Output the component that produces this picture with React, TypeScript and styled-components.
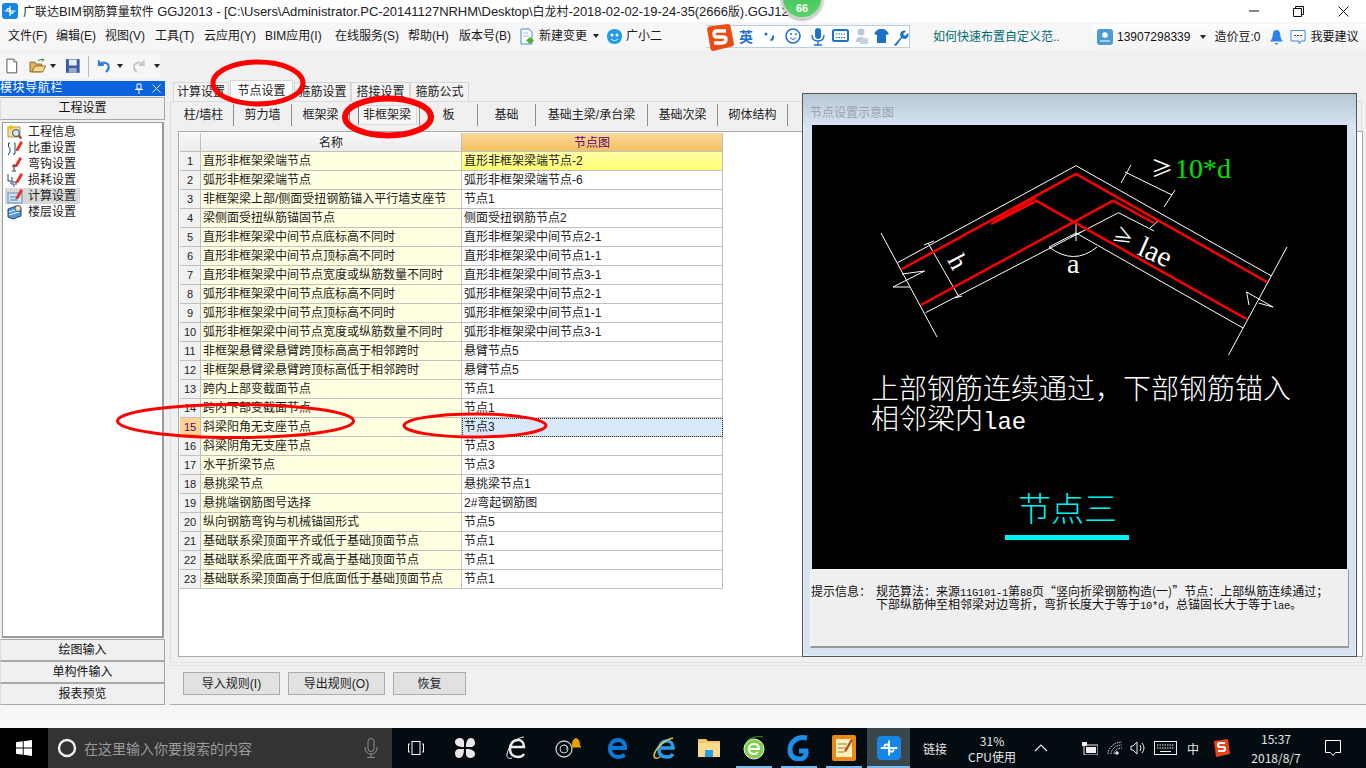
import React from "react";
import styled, { createGlobalStyle } from "styled-components";

const CJK = `"Noto Sans CJK SC", sans-serif`;
const UI = `"Liberation Sans", "Noto Sans CJK SC", sans-serif`;

const Global = createGlobalStyle`
  html, body { margin: 0; padding: 0; background: #f8f8f8; }
  * { box-sizing: border-box; }
`;

const Screen = styled.div`
  position: relative; width: 1366px; height: 768px; overflow: hidden;
  display: flex; flex-direction: column; font: 12px/1 ${UI}; color: #111; background: #f8f8f8;
`;
const TitleBar = styled.div`
  height: 22px; flex: none; display: flex; align-items: center; background: #fff; padding-left: 2px;
`;
const TitleText = styled.div`
  margin-left: 5px; font-size: 13px; white-space: nowrap; color: #222; flex: 1; letter-spacing: -0.04px;
`;
const TitleCjk = styled.span`
  font-size: 12px;
`;
const WinButton = styled.div`
  width: 45px; height: 22px; display: flex; align-items: center; justify-content: center;
`;
const Score = styled.div`
  position: absolute; left: 781px; top: -23px; width: 42px; height: 42px; border-radius: 50%;
  background: linear-gradient(#3dbb57, #58d468); border: 2px solid #c8d0c8; box-shadow: 0 1px 3px #999;
  display: flex; align-items: flex-end; justify-content: center; padding-bottom: 3px;
  color: #fff; font-weight: 700; font-size: 11px;
`;
const MenuBar = styled.div`
  height: 28px; flex: none; display: flex; align-items: center; background: #f6f6f6; padding-left: 8px; position: relative;
`;
const MenuItem = styled.div<{ $w: number }>`
  width: ${p => p.$w}px; flex: none; white-space: nowrap; font-size: 12px; color: #1a1a1a; display: flex; align-items: center;
`;
const Caret = styled.span`
  width: 0; height: 0; border: 3px solid transparent; border-top: 4px solid #222; border-bottom: 0; display: inline-block; flex: none;
`;
const ImeBar = styled.div`
  position: absolute; left: 706px; top: 3px; width: 204px; height: 23px; background: #fff;
  border: 1px solid #b9cfe6; border-left: 0; display: flex; align-items: center; padding-left: 33px; gap: 5px;
`;
const ImeLogo = styled.div`
  position: absolute; left: 0; top: -2px;
`;
const ImeText = styled.span`
  color: #1b72c8; font-weight: 700; font-size: 14px; width: 17px;
`;
const Hint = styled.div`
  position: absolute; left: 933px; top: 9px; color: #006a6e; font-size: 12px; white-space: nowrap;
`;
const UserBox = styled.div`
  position: absolute; left: 1092px; top: 2px; right: 0; height: 26px; background: linear-gradient(#fdfdfd, #f3f3f3);
  display: flex; align-items: center; padding-left: 5px; font-size: 12px;
`;
const UserText = styled.span<{ $ml: number }>`
  margin-left: ${p => p.$ml}px; white-space: nowrap; display: flex; align-items: center;
`;
const ToolBar = styled.div`
  height: 31px; flex: none; background: #f0f0f0; display: flex; align-items: center; padding-top: 1px;
`;
const ToolGroup = styled.div`
  width: 160px; height: 25px; background: #f6f6f6; display: flex; align-items: center; padding-left: 4px; border-radius: 2px;
`;
const ToolGap = styled.span<{ $w: number }>`
  display: inline-block; width: ${p => p.$w}px; flex: none;
`;
const ToolSep = styled.span`
  width: 1px; height: 21px; background: #bbb; margin: 0 7px 0 7px; flex: none;
`;
const Main = styled.div`
  height: 624px; flex: none; display: flex; background: #f0f0f0;
`;
const Side = styled.aside`
  width: 165px; flex: none; display: flex; flex-direction: column;
`;
const SideHead = styled.div`
  height: 15px; background: #0a62dc; color: #fff; display: flex; align-items: center; font-size: 12px; padding-right: 4px;
  letter-spacing: 0.6px;
`;
const SideHeadTitle = styled.span`
  flex: 1;
`;
const SideButton = styled.div<{ $h: number; $mt: number }>`
  height: ${p => p.$h}px; margin-top: ${p => p.$mt}px; background: #f0f0f0; border: 1px solid #a8a8a8; border-left-color: #ddd;
  display: flex; align-items: center; justify-content: center; font-size: 12px;
`;
const SideList = styled.div`
  height: 517px; margin: 2px 1px 0 2px; background: #fff; border: 1px solid #9b9b9b; border-width: 1px 2px 2px 1px; padding: 1px 3px;
  display: flex; flex-direction: column;
`;
const SideRow = styled.div<{ $on?: boolean }>`
  height: 16px; width: 75px; margin-left: -1px; padding-left: 2px; display: flex; align-items: center; gap: 5px; font-size: 12px; color: #222;
  background: ${p => (p.$on ? "#d8d8d8" : "transparent")};
`;
const Content = styled.main`
  width: 1196px; margin-left: 5px; flex: none; display: flex; flex-direction: column; position: relative;
`;
const Tabs = styled.div`
  height: 20px; flex: none; display: flex; align-items: flex-end; padding-left: 3px;
`;
const Tab = styled.div<{ $w: number; $on?: boolean; $ml?: number }>`
  width: ${p => p.$w}px; margin-left: ${p => p.$ml ?? 0}px; height: ${p => (p.$on ? 21 : 19)}px;
  background: ${p => (p.$on ? "#fff" : "#f2f2f2")}; border: 1px solid #d6d6d6; border-bottom: 0;
  display: flex; align-items: center; justify-content: center; font-size: 12px; color: #222; white-space: nowrap;
  position: relative; z-index: ${p => (p.$on ? 1 : 0)};
`;
const Panel = styled.section`
  height: 562px; flex: none; width: 1192px; background: #f0f0f0; border: 1px solid #dcdcdc; border-bottom-color: #e4e4e4;
  display: flex; flex-direction: column; padding-left: 3px; position: relative;
`;
const SubTabs = styled.div`
  height: 29px; flex: none; display: flex; align-items: flex-start; padding-top: 2px;
`;
const SubTab = styled.div<{ $w: number }>`
  width: ${p => p.$w}px; height: 22px; display: flex; align-items: center; justify-content: center; font-size: 12px;
  border-right: 1px solid #8f8f8f; color: #222; white-space: nowrap; flex: none;
`;
const SubActive = styled.div`
  width: 59px; height: 20px; margin-left: 5px; display: flex; align-items: center; justify-content: center;
  background: #f6f6f6; border: 1px solid #dadada; border-left: 1px solid #777;
`;
const GridBox = styled.div`
  width: 1185px; height: 526px; margin-left: 4px; background: #fff; border: 1px solid #a9a9a9; padding: 1px;
`;
const Grid = styled.div`
  width: 543px; display: grid; grid-template-columns: 21px 261px 261px; grid-auto-rows: 19px;
`;
const Cell = styled.div`
  border-right: 1px solid #c0c0c0; border-bottom: 1px solid #c0c0c0; display: flex; align-items: center; padding-left: 2px;
  font-size: 12px; color: #1c1c1c; white-space: nowrap; overflow: hidden;
`;
const HeadCell = styled(Cell)<{ $orange?: boolean }>`
  justify-content: center; padding: 1px 0 0;
  background: ${p => (p.$orange ? "linear-gradient(#fad79b, #f3c160)" : "linear-gradient(#f8f8f8, #ececec)")};
  color: ${p => (p.$orange ? "#5a007c" : "#222")};
`;
const NumCell = styled(Cell)<{ $on?: boolean }>`
  justify-content: center; padding: 0; font-size: 11px;
  background: ${p => (p.$on ? "#ffd08e" : "#f1f1f1")}; color: ${p => (p.$on ? "#4b0a7c" : "#222")};
`;
const NameCell = styled(Cell)`
  background: #ffffe1;
`;
const NodeCell = styled(Cell)<{ $kind?: "first" | "selected" }>`
  background: ${p => (p.$kind === "first" ? "linear-gradient(#ffffa8, #ffff70)" : p.$kind === "selected" ? "#d7e8f8" : "#fff")};
  outline: ${p => (p.$kind === "selected" ? "1px dotted #333" : "none")}; outline-offset: -1px;
`;
const Dialog = styled.div`
  position: absolute; left: 631px; top: -9px; width: 555px; height: 564px; z-index: 3; border: 1px solid #555;
  background: #d6e3f1; display: flex; flex-direction: column; align-items: center;
  box-shadow: inset 0 0 0 1px #e6eef6;
`;
const Caption = styled.div`
  height: 31px; flex: none; width: 100%; background: linear-gradient(#b8c7d5, #d5e3f1);
  color: #9aa3ab; font-size: 12px; padding: 13px 0 0 7px;
`;
const CanvasFrame = styled.div`
  width: 535px; height: 444px; flex: none; background: #000; line-height: 0;
`;
const InfoBox = styled.div`
  width: 539px; height: 79px; flex: none; background: #efefef; border: 1px solid #f8f8f8; border-right-color: #999; border-bottom: 2px solid #999;
  padding: 14px 0 0 0; display: flex; font: 12px/13px ${CJK};
`;
const InfoLabel = styled.div`
  width: 65px; flex: none; color: #111;
`;
const InfoBody = styled.div`
  color: #111; white-space: nowrap; display: flex; flex-direction: column;
`;
const InfoLine = styled.div`
  height: 13px; line-height: 13px;
`;
const Half = styled.span`
  font: 10.5px/13px "Liberation Mono", monospace; letter-spacing: -0.3px;
`;
const Footer = styled.div`
  height: 40px; width: 1196px; margin-top: 2px; flex: none; background: #f0f0f0; border-top: 1px solid #e4e4e4; border-bottom: 1px solid #aaa;
  display: flex; align-items: flex-start; padding: 6px 0 0 13px; gap: 8px;
`;
const ActionButton = styled.div<{ $w: number }>`
  width: ${p => p.$w}px; height: 23px; background: #e1e1e1; border: 1px solid #adadad; display: flex; align-items: center; justify-content: center;
  font-size: 12px; color: #222;
`;
const Spacer = styled.div`
  height: 23px; flex: none; background: linear-gradient(#f4f4f4, #fbfbfb);
`;
const TaskBar = styled.footer`
  height: 40px; flex: none; background: #030c10; display: flex; align-items: stretch; color: #e8e8e8;
`;
const StartBtn = styled.div`
  width: 48px; background: #000; display: flex; align-items: center; justify-content: center; flex: none;
`;
const Search = styled.div`
  width: 344px; flex: none; background: #333; display: flex; align-items: center; padding-left: 9px; color: #9a9a9a; font: 14px ${CJK};
`;
const SearchText = styled.span`
  margin-left: 7px; flex: 1; white-space: nowrap; font-size: 14px;
`;
const TaskSlot = styled.div<{ $w: number; $line?: boolean; $active?: boolean }>`
  width: ${p => p.$w}px; flex: none; display: flex; align-items: center; justify-content: center; position: relative;
  background: ${p => (p.$active ? "#39464b" : "transparent")};
  border-bottom: ${p => (p.$line ? "2px solid #76b9ed" : "0")};
  padding-top: ${p => (p.$line ? "2px" : "0")};
`;
const TrayText = styled.div<{ $w: number; $gap?: number }>`
  width: ${p => p.$w}px; flex: none; display: flex; flex-direction: column; align-items: center; justify-content: center; gap: ${p => p.$gap ?? 3}px;
  font: 12px/13px ${CJK}; color: #e6e6e6; white-space: nowrap;
`;
const Marks = styled.svg`
  position: absolute; left: 0; top: 0; pointer-events: none; z-index: 9;
`;

const Glodon = ({ s = 16 }: { s?: number }) => (
  <svg width={s} height={s} viewBox="0 0 16 16">
    <rect width="16" height="16" rx="3" fill="#1687e4" />
    <path d="M8 3v10M2.5 8h11M8 8C8 5 5 5 5 6.8S7 8 8 8M8 8c0 3 3 3 3 1.2S9 8 8 8" stroke="#fff" strokeWidth="1.2" fill="none" />
  </svg>
);

const IconDoc = () => (
  <svg width="16" height="16" viewBox="0 0 16 16"><path d="M3 1h7l3 3v11H3z" fill="#fff" stroke="#555" /><path d="M10 1v3h3" fill="#ddd" stroke="#777" /></svg>
);
const IconOpen = () => (
  <svg width="18" height="16" viewBox="0 0 18 16"><path d="M1 4h5l1 2h6v8H1z" fill="#e3b45c" stroke="#8a6a2a" /><path d="M3 14l3-6h11l-3 6z" fill="#f6d98c" stroke="#8a6a2a" /><path d="M9 3c2-2 4-2 6-1l-1-1.500M15 2l-2 1" stroke="#3c7a2a" fill="none" /></svg>
);
const IconSave = () => (
  <svg width="16" height="16" viewBox="0 0 16 16"><rect x="1" y="1" width="14" height="14" fill="#3a5aa8" /><rect x="4" y="1.500" width="8" height="6" fill="#e8eef8" /><rect x="4" y="10" width="8" height="5" fill="#9ab" /></svg>
);
const IconUndo = ({ c }: { c: string }) => (
  <svg width="16" height="16" viewBox="0 0 16 16"><path d="M3 2v5h5M3 7c3-4 10-3 10 2 0 2-1 4-3 5" stroke={c} strokeWidth="2.200" fill="none" /></svg>
);
const IconRedo = ({ c }: { c: string }) => (
  <svg width="16" height="16" viewBox="0 0 16 16"><path d="M13 2v5H8M13 7C10 3 3 4 3 9c0 2 1 4 3 5" stroke={c} strokeWidth="2" fill="none" /></svg>
);
const IconChangeDoc = () => (
  <svg width="15" height="17" viewBox="0 0 15 17"><path d="M1 1h8l3 3v12H1z" fill="#fff" stroke="#3c8ed8" /><path d="M3 5h5M3 8h6" stroke="#9cc6ea" /><path d="M10 9l4 3.500-4 3.500-4-3.500z" fill="#58ae2c" /></svg>
);
const IconMascot = () => (
  <svg width="17" height="15" viewBox="0 0 17 15"><path d="M1 7c0-4 3-7 7.500-7S16 3 16 7c0 5-3 8-7.500 8S1 12 1 7z" fill="#1f9cea" /><circle cx="6" cy="6" r="1.500" fill="#fff" /><circle cx="11" cy="6" r="1.500" fill="#fff" /><path d="M5 10c2 2 5 2 7 0" stroke="#fff" fill="none" /></svg>
);
const ImeS = () => (
  <svg width="28" height="27" viewBox="0 0 28 27"><path d="M1 5q0-2 2-2.500L22 0q2 0 2.500 2L28 20q0 2-2 2.500L7 27q-2 0-2.500-2z" fill="#ee4a16" /><path d="M20 7H11q-3 0-3 3t3 3h6q3 0 3 2.500T17 19H8" stroke="#fff" strokeWidth="3.400" fill="none" /></svg>
);
const ImeGlyphs = () => (
  <svg width="148" height="20" viewBox="0 0 148 20" fill="none">
    <circle cx="5" cy="7" r="1.500" fill="#1b72c8" /><path d="M12 8.500q1 3-2.500 5" stroke="#1b72c8" strokeWidth="2" />
    <circle cx="32" cy="9" r="7" stroke="#1b72c8" strokeWidth="1.600" /><circle cx="30" cy="7" r="1" fill="#1b72c8" /><circle cx="35" cy="7" r="1" fill="#1b72c8" /><path d="M29 11q3 3 6 0" stroke="#1b72c8" />
    <rect x="54" y="1" width="6" height="11" rx="3" fill="#1b72c8" /><path d="M51 8q0 6 6 6t6-6M57 14v4M53 18h8" stroke="#1b72c8" strokeWidth="1.400" />
    <rect x="72" y="3" width="15" height="11" rx="1.500" stroke="#1b72c8" strokeWidth="2" /><path d="M75 7h9M75 10.500h9" stroke="#1b72c8" strokeDasharray="1.500 1" />
    <circle cx="100" cy="5" r="3.500" fill="#bcc8d4" /><path d="M95 15q0-5 5-5t5 5z" fill="#bcc8d4" /><rect x="99" y="11" width="8" height="6" fill="#c8d4de" />
    <path d="M115 4l3-2h5l3 2 2 3-3 1v8h-9V8l-3-1z" fill="#1b72c8" />
    <path d="M133 18l7-8a4 4 0 0 1 5-6l-3 3 2 2 3-3a4 4 0 0 1-6 5l-6 8z" fill="#1b72c8" />
  </svg>
);
const UserIcon = () => (
  <svg width="16" height="16" viewBox="0 0 16 16"><rect width="16" height="16" rx="3" fill="#4a9bd0" /><circle cx="8" cy="6" r="2.800" fill="#fff" /><path d="M3 12.500h10v-1H3z" fill="#fff" /></svg>
);
const Bell = () => (
  <svg width="13" height="15" viewBox="0 0 13 15"><path d="M6.500 0C3 0 3 3 2.500 6.500 2 9 1 10 0 11.500h13C12 10 11 9 10.500 6.500 10 3 10 0 6.500 0z" fill="#2a84f0" /><path d="M4.500 13h4l-2 2z" fill="#2a84f0" /></svg>
);
const Chat = () => (
  <svg width="16" height="15" viewBox="0 0 16 15" fill="none"><path d="M1 .5h14v10.500h-4l-2 3v-3H1z" stroke="#3d8ee8" /><path d="M4 5.500h8" stroke="#446" strokeDasharray="2 1" /></svg>
);

const Pencil = ({ x = 9 }: { x?: number }) => (
  <path d={`M${x} 9l4.500-8 2.500 1.500-4.500 8-3 1z`} fill="#e8322c" />
);
const NavIcons = [
  <svg key="0" width="16" height="16" viewBox="0 0 16 16"><rect x="1" y="3" width="12" height="10" fill="#f2e2a6" stroke="#b59a48" /><circle cx="9" cy="9" r="3.500" fill="#d5e6f6" stroke="#446" /><path d="M11.500 11.500l3 3" stroke="#8a4a1a" strokeWidth="2" /><path d="M4 0l1.200 2.500L8 3.500 5.200 4.500 4 7 2.800 4.500 0 3.500l2.800-1z" fill="#f3c000" /></svg>,
  <svg key="1" width="16" height="16" viewBox="0 0 16 16" fill="none"><path d="M3 3H1.500v4L3 8v4l-1.500 2v1M7 3h1v11H6" stroke="#27497c" /><Pencil /></svg>,
  <svg key="2" width="16" height="16" viewBox="0 0 16 16" fill="none"><path d="M7 8v6M5 15h4M5 10h4" stroke="#222" /><Pencil x={8} /></svg>,
  <svg key="3" width="16" height="16" viewBox="0 0 16 16" fill="none"><path d="M1 2v7h3v3h3v3M5 5v5h4v3" stroke="#27497c" /><Pencil /></svg>,
  <svg key="4" width="16" height="16" viewBox="0 0 16 16" fill="none"><rect x="1" y="5" width="14" height="10" fill="#cfe4f7" stroke="#5a8dc0" /><path d="M3 9h7M3 12h8" stroke="#4a7eb8" /><Pencil /></svg>,
  <svg key="5" width="16" height="16" viewBox="0 0 16 16" fill="none"><path d="M1 5l8-3 5 2v8l-8 3-5-2z" fill="#4f98dc" stroke="#27497c" /><path d="M2 8l9-3M2 11l10-3" stroke="#fff" /><circle cx="11" cy="4.500" r="3" fill="#e8e0c8" stroke="#555" /></svg>,
];
const navNames = ["工程信息", "比重设置", "弯钩设置", "损耗设置", "计算设置", "楼层设置"];

const rows: [string, string][] = [
  ["直形非框架梁端节点", "直形非框架梁端节点-2"],
  ["弧形非框架梁端节点", "弧形非框架梁端节点-6"],
  ["非框架梁上部/侧面受扭钢筋锚入平行墙支座节", "节点1"],
  ["梁侧面受扭纵筋锚固节点", "侧面受扭钢筋节点2"],
  ["直形非框架梁中间节点底标高不同时", "直形非框架梁中间节点2-1"],
  ["直形非框架梁中间节点顶标高不同时", "直形非框架梁中间节点1-1"],
  ["直形非框架梁中间节点宽度或纵筋数量不同时", "直形非框架梁中间节点3-1"],
  ["弧形非框架梁中间节点底标高不同时", "弧形非框架梁中间节点2-1"],
  ["弧形非框架梁中间节点顶标高不同时", "弧形非框架梁中间节点1-1"],
  ["弧形非框架梁中间节点宽度或纵筋数量不同时", "弧形非框架梁中间节点3-1"],
  ["非框架悬臂梁悬臂跨顶标高高于相邻跨时", "悬臂节点5"],
  ["非框架悬臂梁悬臂跨顶标高低于相邻跨时", "悬臂节点5"],
  ["跨内上部变截面节点", "节点1"],
  ["跨内下部变截面节点", "节点1"],
  ["斜梁阳角无支座节点", "节点3"],
  ["斜梁阴角无支座节点", "节点3"],
  ["水平折梁节点", "节点3"],
  ["悬挑梁节点", "悬挑梁节点1"],
  ["悬挑端钢筋图号选择", "2#弯起钢筋图"],
  ["纵向钢筋弯钩与机械锚固形式", "节点5"],
  ["基础联系梁顶面平齐或低于基础顶面节点", "节点1"],
  ["基础联系梁底面平齐或高于基础顶面节点", "节点1"],
  ["基础联系梁顶面高于但底面低于基础顶面节点", "节点1"],
];

const subTabs: [string, number][] = [["柱/墙柱", 60], ["剪力墙", 58], ["框架梁", 58], ["非框架梁", 70], ["板", 58], ["基础", 58], ["基础主梁/承台梁", 112], ["基础次梁", 70], ["砌体结构", 70]];

const Diagram = () => (
  <svg width="535" height="444" viewBox="812 125 535 444">
    <g fill="none" stroke="#fff" strokeWidth="1">
      <path d="M897.500 262.700L1076 165.700 1271 275.700" />
      <path d="M925.500 312.700L1118.500 212.700 1154 231" />
      <path d="M1049 247L1076 233 1243 328" />
      <path d="M881 233L937 337M1287 247L1228.500 355" />
      <path d="M902 274L924.500 271 893 287 910 287" />
      <path d="M1249 305L1246.600 292 1273 307 1258.500 303" />
      <path d="M928 243L959 297M924 245L934 241M955 298L962 296" />
      <path d="M1125 172L1172 195M1131 165L1121 183M1175 190L1164 207" />
      <path d="M1049 247Q1074 266 1097 247" />
      <path d="M1076 222V241M1071 237L1081 232" />
      <path d="M1150 228L1158 221" />
    </g>
    <g fill="none" stroke="#f00" strokeWidth="2.500">
      <path d="M902 269L1076 174 1267 282" />
      <path d="M991 224L1036.500 201 1246.600 319" />
      <path d="M993 222L1036 198" strokeWidth="1.500" />
      <path d="M921 305L1113 200.700 1154 223" />
    </g>
    <g fontFamily='"Liberation Serif", serif' fill="#fff">
      <text x="1151" y="176" fontSize="22" fontFamily={CJK}>≥</text>
      <text x="1175" y="178" fontSize="28" fill="#00e000">10*d</text>
      <text x="0" y="0" fontSize="20" transform="translate(1111 239) rotate(28)" fontFamily={CJK}>≥</text>
      <text x="0" y="0" fontSize="29" transform="translate(1136 254) rotate(24)">lae</text>
      <text x="1067" y="273" fontSize="28">a</text>
      <text x="0" y="0" fontSize="26" transform="translate(947 260) rotate(62)">h</text>
    </g>
    <g fontFamily={CJK} fill="#fff" fontWeight="300">
      <text x="871" y="399" fontSize="28">上部钢筋连续通过，下部钢筋锚入</text>
      <text x="871" y="429" fontSize="28">相邻梁内<tspan fontFamily='"Liberation Mono", monospace' fontSize="24">lae</tspan></text>
      <text x="1018" y="521" fontSize="33" fill="#00f2f2">节点三</text>
    </g>
    <rect x="1005" y="535" width="124" height="5" fill="#00f2f2" />
  </svg>
);

const WinLogo = () => (
  <svg width="16" height="16" viewBox="0 0 16 16" fill="#fff"><path d="M0 2.300l6.800-1v6.200H0zM7.700 1.200L16 0v7.500H7.700zM0 8.400h6.800v6.300L0 13.700zM7.700 8.400H16V16l-8.300-1.200z" /></svg>
);
const TaskIcons = {
  view: <svg width="16" height="14" viewBox="0 0 16 14" fill="none" stroke="#fff"><rect x="4" y=".5" width="8" height="13" /><path d="M2 3H.500v8H2M14 3h1.500v8H14" /></svg>,
  fan: <svg width="22" height="22" viewBox="0 0 22 22" fill="#e8e8e8"><path d="M10 10C4 10 1 8 1 5s3-4 5-4 3 1 4 3zM12 10c0-6 2-9 5-9s4 3 4 5-1 3-3 4zM12 12c6 0 9 2 9 5s-3 4-5 4-3-1-4-3zM10 12c0 6-2 9-5 9s-4-3-4-5 1-3 3-4z" /></svg>,
  ie: <svg width="22" height="24" viewBox="0 0 22 24" fill="none" stroke="#eee" strokeWidth="2.500"><path d="M5 11h13c0-5-3-7-6-7-5 0-8 4-8 9s3 8 8 8c3 0 5-1 6-3" /><path d="M18 1C12 1 3 8 1 18c-1 4 2 5 5 4" strokeWidth="1" /></svg>,
  swirl: <svg width="26" height="24" viewBox="0 0 26 24" fill="none"><circle cx="9" cy="13" r="8" stroke="#ccc" strokeWidth="1.300" /><circle cx="9" cy="13" r="4" stroke="#ccc" /><path d="M9 9c3 0 4 3 2 5" stroke="#ccc" /><path d="M17 10c0-5 1-7 4-8 3 1 4 3 4 8h2-10z" fill="#e8a000" /><rect x="16" y="10" width="10" height="1.500" fill="#e8a000" /></svg>,
  edge: <svg width="20" height="22" viewBox="0 0 20 22" fill="none" stroke="#0a78d8" strokeWidth="4"><path d="M3 11h14C17 5 14 3 10 3 5 3 2 7 2 12s4 8 8 8c3 0 5-1 7-2" /></svg>,
  ie2: <svg width="24" height="24" viewBox="0 0 24 24" fill="none"><path d="M6 12h14c0-5-3-7-6-7-5 0-8 4-8 9s3 7 8 7c3 0 5-1 6-3" stroke="#2a9be8" strokeWidth="3.500" /><path d="M20 2C13 3 3 11 1 19c0 4 3 4 6 2" stroke="#e8c440" strokeWidth="1.500" /></svg>,
  folder: <svg width="22" height="20" viewBox="0 0 22 20"><path d="M0 1h8l2 2h12v16H0z" fill="#f0c868" /><rect y="5" width="22" height="14" fill="#f8dc8c" /><rect x="7" y="12" width="8" height="7" fill="#2a9be8" /></svg>,
  green: <svg width="22" height="26" viewBox="0 0 22 26" fill="none"><circle cx="11" cy="14" r="10" fill="#7ed048" stroke="#eee" /><path d="M6 14h10c0-3-2-5-5-5s-5 2-5 5 2 5 5 5c2 0 3-1 4-2" stroke="#fff" strokeWidth="2" /><path d="M4 6c4-4 10-5 16-4" stroke="#4a9a2a" /></svg>,
  g: <svg width="24" height="26" viewBox="0 0 24 26" fill="none"><path d="M20 3C10 1 3 7 3 15s6 9 10 9 7-4 6-8h-7" stroke="#1b8fe8" strokeWidth="5" /></svg>,
  note: <svg width="24" height="26" viewBox="0 0 24 26"><rect width="24" height="26" rx="2" fill="#e88a14" /><rect x="4" y="4" width="16" height="18" fill="#fbeec0" /><path d="M6 9h9M6 13h9M6 17h6" stroke="#a87830" /><path d="M12 16l7-12 2 1-7 12z" fill="#b84a14" /></svg>,
  caret: <svg width="14" height="8" viewBox="0 0 14 8" fill="none" stroke="#eee" strokeWidth="1.200"><path d="M1 7l6-6 6 6" /></svg>,
  power: <svg width="16" height="13" viewBox="0 0 16 13" fill="#eee"><rect x="2" y="3" width="14" height="10" fill="none" stroke="#eee" /><rect x="4" y="5" width="10" height="6" /><rect width="5" height="4" /></svg>,
  wifi: <svg width="16" height="14" viewBox="0 0 16 14" fill="none" stroke="#ddd"><path d="M1 13C1 7 7 1 15 1M4 13c0-4 4-9 11-9M7 13c0-3 3-6 8-6" strokeDasharray="1.500 1" /><circle cx="10" cy="12" r="1.300" fill="#ddd" /></svg>,
  vol: <svg width="16" height="14" viewBox="0 0 16 14" fill="none" stroke="#eee"><path d="M1 5v4h2l4 4V1L3 5z" /><path d="M10 4q2 3 0 6M12 2q4 5 0 10" /></svg>,
  kb: <svg width="23" height="14" viewBox="0 0 23 14" fill="none" stroke="#eee"><rect x=".5" y=".5" width="22" height="13" /><path d="M3 4h17M3 7h17" strokeDasharray="1.500 1" /><path d="M6 10.500h11" /></svg>,
  sogou: <svg width="16" height="18" viewBox="0 0 16 18"><path d="M0 2l14-2 2 15-14 3z" fill="#e8431a" /><path d="M11 4H6q-2 0-2 2t2 2h3q2 0 2 2t-2 2H4" stroke="#fff" strokeWidth="2.200" fill="none" /></svg>,
  notif: <svg width="16" height="16" viewBox="0 0 16 16" fill="none" stroke="#fff"><path d="M.5.500h15V12.500h-5l-2.500 3-2.500-3h-5z" /></svg>,
  mic: <svg width="14" height="20" viewBox="0 0 14 20" fill="none" stroke="#8e8e8e"><rect x="4" y=".5" width="6" height="13" rx="3" /><path d="M1 9q0 7 6 7t6-7M7 16v3M3 19.500h8" /></svg>,
};

export default function App() {
  return (
    <Screen>
      <Global />
      <TitleBar>
        <Glodon />
        <TitleText><TitleCjk>广联达</TitleCjk>BIM<TitleCjk>钢筋算量软件</TitleCjk> GGJ2013 - [C:\Users\Administrator.PC-20141127NRHM\Desktop\<TitleCjk>白龙村</TitleCjk>-2018-02-02-19-24-35(2666<TitleCjk>版</TitleCjk>).GGJ12</TitleText>
        <WinButton><svg width="10" height="10" viewBox="0 0 10 10"><path d="M0 5h10" stroke="#111" /></svg></WinButton>
        <WinButton><svg width="11" height="11" viewBox="0 0 11 11" fill="none" stroke="#111"><path d="M.5 2.500h8v8h-8zM2.500 2.500v-2h8v8h-2" /></svg></WinButton>
        <WinButton><svg width="11" height="11" viewBox="0 0 11 11" stroke="#111"><path d="M.5.500l10 10M10.500.500l-10 10" /></svg></WinButton>
      </TitleBar>
      <Score>66</Score>
      <MenuBar>
        <MenuItem $w={48}>文件(F)</MenuItem>
        <MenuItem $w={49}>编辑(E)</MenuItem>
        <MenuItem $w={50}>视图(V)</MenuItem>
        <MenuItem $w={49}>工具(T)</MenuItem>
        <MenuItem $w={61}>云应用(Y)</MenuItem>
        <MenuItem $w={70}>BIM应用(I)</MenuItem>
        <MenuItem $w={73}>在线服务(S)</MenuItem>
        <MenuItem $w={51}>帮助(H)</MenuItem>
        <MenuItem $w={61}>版本号(B)</MenuItem>
        <MenuItem $w={86}><IconChangeDoc /><ToolGap $w={4} />新建变更<ToolGap $w={6} /><Caret /></MenuItem>
        <MenuItem $w={60}><IconMascot /><ToolGap $w={3} />广小二</MenuItem>
        <ImeBar>
          <ImeLogo><ImeS /></ImeLogo>
          <ImeText>英</ImeText>
          <ImeGlyphs />
        </ImeBar>
        <Hint>如何快速布置自定义范..</Hint>
        <UserBox>
          <UserIcon />
          <UserText $ml={4}>13907298339</UserText>
          <UserText $ml={10}><Caret /></UserText>
          <UserText $ml={8}>造价豆:0</UserText>
          <UserText $ml={10}><Bell /></UserText>
          <UserText $ml={7}><Chat /></UserText>
          <UserText $ml={4}>我要建议</UserText>
        </UserBox>
      </MenuBar>
      <ToolBar>
        <ToolGroup>
          <IconDoc /><ToolGap $w={9} /><IconOpen /><ToolGap $w={4} /><Caret /><ToolGap $w={9} /><IconSave />
          <ToolSep />
          <IconUndo c="#2f7fd0" /><ToolGap $w={6} /><Caret /><ToolGap $w={8} /><IconRedo c="#c8c8c8" /><ToolGap $w={7} /><Caret />
        </ToolGroup>
      </ToolBar>
      <Main>
        <Side>
          <SideHead>
            <SideHeadTitle>模块导航栏</SideHeadTitle>
            <svg width="10" height="11" viewBox="0 0 10 11" fill="none" stroke="#fff"><path d="M3 1h4v5H3zM1 6.500h8M5 7v4" /></svg>
            <ToolGap $w={8} />
            <svg width="9" height="9" viewBox="0 0 9 9" stroke="#dfe" fill="none"><path d="M.5.500l8 8M8.500.500l-8 8" /></svg>
          </SideHead>
          <SideButton $h={23} $mt={1}>工程设置</SideButton>
          <SideList>
            {navNames.map((n, i) => (
              <SideRow key={n} $on={i === 4}>{NavIcons[i]}<span>{n}</span></SideRow>
            ))}
          </SideList>
          <SideButton $h={22} $mt={1}>绘图输入</SideButton>
          <SideButton $h={22} $mt={0}>单构件输入</SideButton>
          <SideButton $h={22} $mt={0}>报表预览</SideButton>
        </Side>
        <Content>
          <Tabs>
            <Tab $w={56}>计算设置</Tab>
            <Tab $w={63} $on $ml={1}>节点设置</Tab>
            <Tab $w={57} $ml={1}>箍筋设置</Tab>
            <Tab $w={59}>搭接设置</Tab>
            <Tab $w={59}>箍筋公式</Tab>
          </Tabs>
          <Panel>
            <SubTabs>
              {subTabs.map(([t, w]) => (
                <SubTab key={t} $w={w}>{t === "非框架梁" ? <SubActive>{t}</SubActive> : t}</SubTab>
              ))}
            </SubTabs>
            <GridBox>
              <Grid>
                <HeadCell />
                <HeadCell>名称</HeadCell>
                <HeadCell $orange>节点图</HeadCell>
                {rows.map(([a, b], i) => (
                  <React.Fragment key={i}>
                    <NumCell $on={i === 14}>{i + 1}</NumCell>
                    <NameCell>{a}</NameCell>
                    <NodeCell $kind={i === 0 ? "first" : i === 14 ? "selected" : undefined}>{b}</NodeCell>
                  </React.Fragment>
                ))}
              </Grid>
            </GridBox>
            <Dialog>
              <Caption>节点设置示意图</Caption>
              <CanvasFrame><Diagram /></CanvasFrame>
              <InfoBox>
                <InfoLabel>提示信息：</InfoLabel>
                <InfoBody>
                  <InfoLine>规范算法：来源<Half>11G101-1</Half>第<Half>88</Half>页“竖向折梁钢筋构造(一)”节点：上部纵筋连续通过；</InfoLine>
                  <InfoLine>下部纵筋伸至相邻梁对边弯折，弯折长度大于等于<Half>10*d</Half>，总锚固长大于等于<Half>lae</Half>。</InfoLine>
                </InfoBody>
              </InfoBox>
            </Dialog>
          </Panel>
          <Footer>
            <ActionButton $w={97}>导入规则(I)</ActionButton>
            <ActionButton $w={97}>导出规则(O)</ActionButton>
            <ActionButton $w={73}>恢复</ActionButton>
          </Footer>
        </Content>
      </Main>
      <Spacer />
      <TaskBar>
        <StartBtn><WinLogo /></StartBtn>
        <Search>
          <svg width="20" height="20" viewBox="0 0 20 20" fill="none"><circle cx="10" cy="10" r="8" stroke="#eee" strokeWidth="2.400" /></svg>
          <SearchText>在这里输入你要搜索的内容</SearchText>
          {TaskIcons.mic}
          <ToolGap $w={14} />
        </Search>
        <TaskSlot $w={48}>{TaskIcons.view}</TaskSlot>
        <TaskSlot $w={50}>{TaskIcons.fan}</TaskSlot>
        <TaskSlot $w={54}>{TaskIcons.ie}</TaskSlot>
        <TaskSlot $w={48}>{TaskIcons.swirl}</TaskSlot>
        <TaskSlot $w={52}>{TaskIcons.edge}</TaskSlot>
        <TaskSlot $w={42}>{TaskIcons.ie2}</TaskSlot>
        <TaskSlot $w={46}>{TaskIcons.folder}</TaskSlot>
        <TaskSlot $w={4} />
        <TaskSlot $w={36} $line>{TaskIcons.green}</TaskSlot>
        <TaskSlot $w={9} />
        <TaskSlot $w={36} $line>{TaskIcons.g}</TaskSlot>
        <TaskSlot $w={9} />
        <TaskSlot $w={36} $line>{TaskIcons.note}</TaskSlot>
        <TaskSlot $w={5} />
        <TaskSlot $w={43} $line $active><Glodon s={24} /></TaskSlot>
        <TrayText $w={50}>链接</TrayText>
        <TrayText $w={64}><span>31%</span><span>CPU使用</span></TrayText>
        <TaskSlot $w={34}>{TaskIcons.caret}</TaskSlot>
        <TaskSlot $w={21} />
        <TaskSlot $w={22}>{TaskIcons.power}</TaskSlot>
        <TaskSlot $w={28}>{TaskIcons.wifi}</TaskSlot>
        <TaskSlot $w={18}>{TaskIcons.vol}</TaskSlot>
        <TaskSlot $w={36}>{TaskIcons.kb}</TaskSlot>
        <TrayText $w={20}>中</TrayText>
        <TaskSlot $w={38}>{TaskIcons.sogou}</TaskSlot>
        <TrayText $w={70} $gap={6}><span>15:37</span><span>2018/8/7</span></TrayText>
        <TaskSlot $w={44}>{TaskIcons.notif}</TaskSlot>
      </TaskBar>
      <Marks width="1366" height="768" viewBox="0 0 1366 768" fill="none" stroke="#f00">
        <ellipse cx="258" cy="83" rx="45" ry="21" strokeWidth="5" />
        <ellipse cx="388" cy="117" rx="43" ry="18.500" strokeWidth="6" />
        <ellipse cx="235.500" cy="421" rx="118" ry="16.500" strokeWidth="3" />
        <ellipse cx="475" cy="425.500" rx="71" ry="11.500" strokeWidth="3" />
      </Marks>
    </Screen>
  );
}
